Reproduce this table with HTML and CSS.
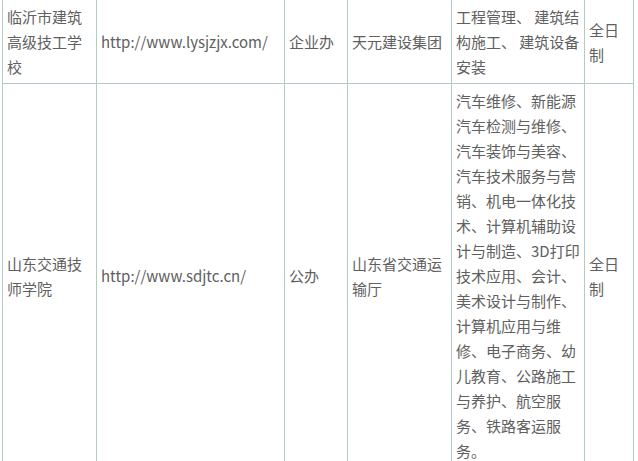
FILE: index.html
```html
<!DOCTYPE html>
<html lang="zh-CN">
<head>
<meta charset="utf-8">
<title>学校列表</title>
<link rel="stylesheet" href="styles.css">
</head>
<body>
<table class="schools">
  <colgroup>
    <col class="c-name">
    <col class="c-url">
    <col class="c-type">
    <col class="c-org">
    <col class="c-major">
    <col class="c-mode">
  </colgroup>
  <tbody>
    <tr class="row-first">
      <td>临沂市建筑高级技工学校</td>
      <td>http://www.lysjzjx.com/</td>
      <td>企业办</td>
      <td>天元建设集团</td>
      <td>工程管理、 建筑结构施工、 建筑设备安装</td>
      <td>全日制</td>
    </tr>
    <tr>
      <td>山东交通技师学院</td>
      <td>http://www.sdjtc.cn/</td>
      <td>公办</td>
      <td>山东省交通运输厅</td>
      <td>汽车维修、新能源汽车检测与维修、汽车装饰与美容、汽车技术服务与营销、机电一体化技术、计算机辅助设计与制造、3D打印技术应用、会计、美术设计与制作、计算机应用与维修、电子商务、幼儿教育、公路施工与养护、航空服务、铁路客运服务。</td>
      <td>全日制</td>
    </tr>
  </tbody>
</table>
</body>
</html>
```

FILE: styles.css
```css
html, body {
  margin: 0;
  padding: 0;
  background: #ffffff;
}

body {
  overflow: hidden;
}

.schools {
  border-collapse: collapse;
  table-layout: fixed;
  width: 631px;
  margin: -1px 0 0 2px;
  font-family: "Noto Sans CJK SC", "Microsoft YaHei", sans-serif;
  font-size: 15px;
  line-height: 25px;
  color: #606060;
}

.c-name { width: 94px; }
.c-url { width: 188px; }
.c-type { width: 63px; }
.c-org { width: 104px; }
.c-major { width: 133px; }
.c-mode { width: 49px; }

.schools td {
  border: 1px solid #b2ccc5;
  padding: 4px 2px 4px 4px;
  vertical-align: middle;
  word-break: normal;
}
```
